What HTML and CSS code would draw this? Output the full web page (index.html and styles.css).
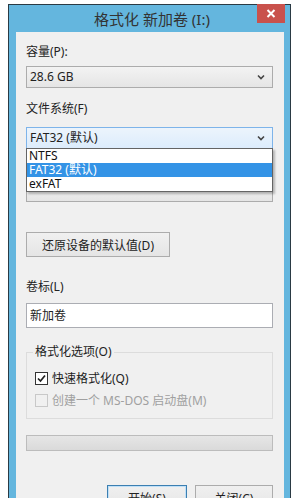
FILE: index.html
```html
<!DOCTYPE html>
<html lang="zh-CN">
<head>
<meta charset="utf-8">
<title>格式化 新加卷 (I:)</title>
<link rel="stylesheet" href="styles.css">
</head>
<body>
<div class="page">
  <div class="window">
    <div class="titlebar">
      <div class="title">格式化 新加卷 (I:)</div>
      <div class="close"><svg width="10" height="9" viewBox="0 0 10 9"><path d="M1.5 1 L8.5 8 M8.5 1 L1.5 8" stroke="#fff" stroke-width="2"/></svg></div>
    </div>
    <div class="client">
      <div class="label first">容量(P):</div>
      <div class="select s1">
        <span>28.6 GB</span>
        <svg class="chev" width="8" height="6" viewBox="0 0 8 6"><path d="M1 1.5 L4 4.5 L7 1.5" fill="none" stroke="#444" stroke-width="1.6"/></svg>
      </div>

      <div class="label l2">文件系统(F)</div>
      <div class="combo">
        <div class="select focus">
          <span>FAT32 (默认)</span>
          <svg class="chev" width="8" height="6" viewBox="0 0 8 6"><path d="M1 1.5 L4 4.5 L7 1.5" fill="none" stroke="#444" stroke-width="1.6"/></svg>
        </div>
        <ul class="list">
          <li>NTFS</li>
          <li class="sel">FAT32 (默认)</li>
          <li>exFAT</li>
        </ul>
      </div>

      <div class="select covered"></div>

      <div class="btn restore">还原设备的默认值(D)</div>

      <div class="label l4">卷标(L)</div>
      <div class="input">新加卷</div>

      <fieldset class="group">
        <legend>格式化选项(O)</legend>
        <div class="check"><span class="box"><svg width="9" height="9" viewBox="0 0 9 9"><path d="M1 4.5 L3.5 7 L8 1.5" fill="none" stroke="#222" stroke-width="1.7"/></svg></span>快速格式化(Q)</div>
        <div class="check disabled"><span class="box"></span>创建一个 MS-DOS 启动盘(M)</div>
      </fieldset>

      <div class="progress"></div>

      <div class="actions">
        <div class="btn default">开始(S)</div>
        <div class="btn close-btn">关闭(C)</div>
      </div>
    </div>
  </div>
</div>
</body>
</html>
```
FILE: styles.css
```css
html, body {
  margin: 0;
  padding: 0;
  background: #fff;
}
body {
  width: 293px;
  height: 498px;
  overflow: hidden;
  font-family: "Noto Sans", "Noto Sans CJK SC", sans-serif;
  font-size: 12px;
  color: #222;
}
.page {
  padding: 4px 0 0 8px;
}
.window {
  width: 268px;
  border: 1px solid #2a3a44;
  border-bottom: none;
  background: #64b6de;
  padding: 0 6px 0 7px;
  height: 520px;
}
.titlebar {
  height: 27px;
  display: flex;
  align-items: center;
  justify-content: center;
  position: relative;
}
.title {
  font-size: 15px;
  color: #333;
  padding-left: 4px;
}
.close {
  position: absolute;
  right: -1px;
  top: -1px;
  width: 28px;
  height: 19px;
  background: #c9514c;
  display: flex;
  align-items: center;
  justify-content: center;
}
.client {
  background: #f0f0f0;
  padding: 11px 11px 0 10px;
  height: 500px;
}
.label {
  height: 18px;
  line-height: 18px;
  color: #222;
}
.label.l2 {
  margin-top: 12px;
}
.label.l4 {
  margin-top: 21px;
}
.select {
  height: 20px;
  border: 1px solid #acacac;
  background: linear-gradient(#f3f3f3, #e5e5e5);
  display: flex;
  align-items: center;
  justify-content: space-between;
  padding: 0 7px 0 3px;
  line-height: 20px;
}
.select.s1 {
  margin-top: 5px;
}
.select.focus {
  border-color: #7eb4ea;
  background: linear-gradient(#ecf4fc, #dcecfc);
}
.select.covered {
  margin-top: 31px;
}
.chev {
  display: block;
}
.combo {
  position: relative;
  margin-top: 9px;
}
.list {
  position: absolute;
  left: 0;
  top: 21px;
  width: 245px;
  margin: 0;
  padding: 0;
  list-style: none;
  background: #fff;
  border: 1px solid #646464;
  box-shadow: 2px 2px 2px rgba(0,0,0,0.25);
  z-index: 2;
}
.list li {
  height: 14px;
  line-height: 14px;
  padding-left: 2px;
  color: #111;
}
.list li.sel {
  background: #3393e6;
  color: #fff;
}
.btn {
  height: 23px;
  border: 1px solid #acacac;
  background: linear-gradient(#f0f0f0, #e5e5e5);
  display: flex;
  align-items: center;
  justify-content: center;
  color: #222;
}
.restore {
  width: 142px;
  margin-top: 30px;
}
.input {
  margin-top: 7px;
  height: 23px;
  line-height: 23px;
  border: 1px solid #abadb3;
  background: #fff;
  padding-left: 3px;
}
.group {
  margin: 15px 0 0 0;
  padding: 6px 8px 7px 8px;
  border: 1px solid #dcdcdc;
  min-width: 0;
}
.group legend {
  height: 18px;
  line-height: 18px;
  padding: 0 2px;
  margin-left: -2px;
  color: #222;
}
.check {
  display: flex;
  align-items: center;
  height: 22px;
  gap: 4px;
}
.box {
  width: 11px;
  height: 11px;
  border: 1px solid #333;
  background: #fff;
  display: flex;
  align-items: center;
  justify-content: center;
}
.check.disabled {
  color: #a0a0a0;
}
.check.disabled .box {
  border-color: #c8c8c8;
  background: #f0f0f0;
}
.progress {
  margin-top: 16px;
  height: 14px;
  border: 1px solid #bcbcbc;
  background: linear-gradient(#e6e6e6, #dadada);
}
.actions {
  margin-top: 34px;
  display: flex;
  justify-content: flex-end;
  gap: 8px;
}
.actions .btn.default {
  width: 78px;
  border-color: #3c7fb1;
  box-shadow: inset 0 0 0 1px #bfe0f8;
}
.actions .btn.close-btn {
  width: 76px;
}
```
